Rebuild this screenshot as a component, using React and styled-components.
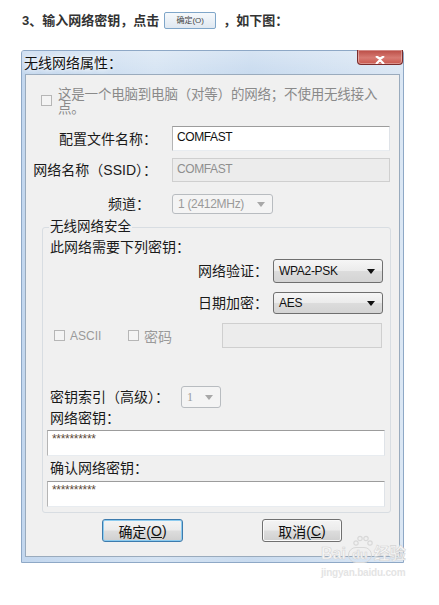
import React from 'react'
import styled, { createGlobalStyle } from 'styled-components';

const GlobalStyle = createGlobalStyle`
    html, body {
        margin: 0;
        padding: 0;
        background: #ffffff;
    }
    body {
        font-family: "Liberation Sans", "Noto Sans CJK SC", sans-serif;
        color: #1a1a1a;
    }
`;

const Page = styled.div`
    position: relative;
    width: 439px;
    height: 605px;
    overflow: hidden;
    background: #fff;
`;

const Intro = styled.div`
    display: flex;
    align-items: center;
    padding: 12px 0 0 22px;
    height: 17px;
    font-size: 13px;
    line-height: 17px;
    font-weight: bold;
    color: #333;
`;

const InlineButton = styled.span`
    display: inline-flex;
    align-items: center;
    justify-content: center;
    width: 50px;
    height: 15px;
    margin: 0 7px 0 5px;
    border: 1px solid #7fa6c9;
    border-radius: 2px;
    background: linear-gradient(#f6f9fc, #dfe8f1);
    font-size: 8px;
    font-weight: normal;
    color: #444;
`;

const Window = styled.div`
    width: 383px;
    margin: 21px 0 0 21px;
    box-sizing: border-box;
    border: 1px solid #8ea8c6;
    border-radius: 3px 3px 0 0;
    background: linear-gradient(90deg, #c3d7ee 0%, #d6e4f3 35%, #c9dbef 60%, #dbe7f4 100%);
    padding-bottom: 5px;
`;

const TitleBar = styled.div`
    display: flex;
    justify-content: space-between;
    align-items: flex-start;
    height: 23px;
    background: linear-gradient(180deg, rgba(255,255,255,0.25), rgba(255,255,255,0));
`;

const TitleText = styled.div`
    padding: 4px 0 0 2px;
    font-size: 14px;
    line-height: 16px;
    color: #111;
    text-shadow: 0 0 4px #ffffff, 0 0 6px #ffffff;
`;

const CloseButton = styled.div`
    display: flex;
    align-items: flex-end;
    justify-content: center;
    width: 46px;
    height: 15px;
    margin-top: -1px;
    box-sizing: border-box;
    border: 1px solid #7a2c2c;
    border-top: none;
    border-radius: 0 0 4px 4px;
    background: linear-gradient(180deg, #b94b44 0%, #d77a72 55%, #c9574e 100%);
    box-shadow: inset 0 0 0 1px rgba(255,255,255,0.35);
    overflow: hidden;
`;

const Panel = styled.div`
    margin: 0 3px;
    border: 1px solid #9aabbd;
    background: #f0f0f0;
    padding-bottom: 14px;
`;

const CheckRow = styled.div`
    display: flex;
    align-items: flex-start;
    gap: 6px;
    margin: 13px 0 0 15px;
`;

const Box = styled.span`
    flex: none;
    display: inline-block;
    width: 11px;
    height: 11px;
    box-sizing: border-box;
    margin-top: ${props => props.offset || 0}px;
    border: 1px solid ${props => props.disabled ? '#b6b6b6' : '#8f8f8f'};
    background: ${props => props.disabled ? '#f4f4f4' : 'linear-gradient(135deg, #e0e0e0, #ffffff)'};
`;

const WrapText = styled.div`
    font-size: 13.5px;
    line-height: 14px;
    color: #8a8a8a;
    letter-spacing: -0.2px;
`;

const FieldGrid = styled.div`
    display: grid;
    grid-template-columns: 131px 218px;
    column-gap: 15px;
    align-items: center;
    margin-top: 10px;
`;

const Label = styled.div`
    font-size: 14px;
    line-height: 16px;
    text-align: ${props => props.align || 'right'};
    color: ${props => props.disabled ? '#8d8d8d' : '#1a1a1a'};
    padding-right: ${props => props.pr || 0}px;
    margin-top: ${props => props.mt || 0}px;
    white-space: nowrap;
`;

const TextBox = styled.div`
    box-sizing: border-box;
    height: ${props => props.h}px;
    width: ${props => props.w ? props.w + 'px' : 'auto'};
    margin-top: ${props => props.mt || 0}px;
    margin-left: ${props => props.ml || 0}px;
    padding: 3px 4px;
    border: 1px solid;
    border-color: ${props => props.disabled ? '#cfcfcf' : '#9c9c9c #dfe3e8 #e8ecf0 #b5b5b5'};
    background: ${props => props.disabled ? '#ececec' : '#ffffff'};
    color: ${props => props.disabled ? '#8f8f8f' : '#111'};
    font-size: 12px;
    line-height: 14px;
    letter-spacing: -0.4px;
`;

const Secret = styled.span`
    display: block;
    margin-top: -1px;
    font-family: "Liberation Sans", sans-serif;
    font-size: 12px;
    line-height: 12px;
    letter-spacing: -0.3px;
    color: #5c4a38;
`;

const Combo = styled.div`
    box-sizing: border-box;
    display: flex;
    align-items: center;
    justify-content: space-between;
    width: ${props => props.w}px;
    height: ${props => props.h}px;
    margin-top: ${props => props.mt || 0}px;
    padding: 0 7px 0 5px;
    border: 1px solid ${props => props.disabled ? '#b8bcc0' : '#6f6f6f'};
    border-radius: 3px;
    background: ${props => props.disabled ? '#f4f4f4' : 'linear-gradient(180deg, #f6f6f6 0%, #ebebeb 50%, #dcdcdc 51%, #d4d4d4 100%)'};
    color: ${props => props.disabled ? '#9a9a9a' : '#111'};
    font-size: 12px;
    font-family: ${props => props.serif ? '"Liberation Serif", serif' : 'inherit'};
    letter-spacing: -0.3px;
`;

const Arrow = styled.span`
    width: 0;
    height: 0;
    border-left: 4px solid transparent;
    border-right: 4px solid transparent;
    border-top: 5px solid ${props => props.disabled ? '#a8a8a8' : '#111'};
`;

const Group = styled.fieldset`
    box-sizing: border-box;
    width: 349px;
    margin: 5px 0 0 16px;
    padding: 0 7px 5px 7px;
    border: 1px solid #d8dde2;
    border-radius: 3px;
    min-width: 0;
`;

const Legend = styled.legend`
    padding: 0 1px;
    margin-left: -1px;
    font-size: 13.5px;
    line-height: 16px;
    color: #1a1a1a;
`;

const Para = styled.div`
    margin-top: ${props => props.mt || 0}px;
    font-size: 14px;
    line-height: 16px;
    color: #1a1a1a;
    white-space: nowrap;
`;

const SecurityRow = styled.div`
    display: grid;
    grid-template-columns: 218px 110px;
    column-gap: 5px;
    align-items: center;
    margin-top: ${props => props.mt || 0}px;
`;

const OptionRow = styled.div`
    display: flex;
    align-items: center;
    margin-top: 9px;
    padding-left: 4px;
`;

const Option = styled.div`
    display: flex;
    align-items: center;
    gap: 5px;
    width: ${props => props.w}px;
    font-size: ${props => props.small ? 12 : 14}px;
    color: #9a9a9a;
`;

const IndexRow = styled.div`
    display: flex;
    align-items: center;
    gap: 12px;
    margin-top: 38px;
`;

const ButtonRow = styled.div`
    display: flex;
    gap: 79px;
    margin: 6px 0 0 76px;
`;

const DialogButton = styled.div`
    box-sizing: border-box;
    display: flex;
    align-items: center;
    justify-content: center;
    width: ${props => props.w}px;
    height: 23px;
    border: 1px solid ${props => props.focused ? '#3d7bad' : '#707070'};
    border-radius: 3px;
    background: linear-gradient(180deg, #f4f4f4 0%, #ebebeb 48%, #dddddd 52%, #cfcfcf 100%);
    box-shadow: ${props => props.focused ? 'inset 0 0 0 1px #8ccbef' : 'inset 0 0 0 1px #fafafa'};
    font-size: 14px;
    color: #111;
`;

const Key = styled.span`
    text-decoration: underline;
`;

const Watermark = styled.div`
    position: absolute;
    left: 321px;
    top: 545px;
    display: flex;
    flex-direction: column;
    align-items: flex-start;
    pointer-events: none;
`;

const MarkTop = styled.div`
    display: flex;
    align-items: flex-end;
    gap: 2px;
    font-size: 16px;
    font-weight: bold;
    line-height: 18px;
    -webkit-text-stroke: 0.6px #d4d4d4;
    color: #f7f7f7;
`;

const Du = styled.span`
    position: relative;
    padding: 0 3px;
    border: 1.5px solid #d8d8d8;
    border-radius: 9px;
    font-size: 13px;
    line-height: 14px;
`;

const MarkUrl = styled.div`
    margin-top: 4px;
    font-size: 10px;
    font-weight: bold;
    color: #e4e4e4;
    letter-spacing: -0.2px;
`;

const Paw = () => (
    <svg width="22" height="12" viewBox="0 0 22 12" style={{ position: 'absolute', left: 3, top: -13 }}>
        <circle cx="4" cy="8" r="2.2" fill="none" stroke="#d8d8d8" strokeWidth="1.2" />
        <circle cx="8" cy="3.5" r="2.2" fill="none" stroke="#d8d8d8" strokeWidth="1.2" />
        <circle cx="14" cy="3.5" r="2.2" fill="none" stroke="#d8d8d8" strokeWidth="1.2" />
        <circle cx="18" cy="8" r="2.2" fill="none" stroke="#d8d8d8" strokeWidth="1.2" />
    </svg>
);

const App = () => {
    return (
        <Page>
            <GlobalStyle />
            <Intro>
                3、输入网络密钥，点击<InlineButton>确定(O)</InlineButton>，如下图：
            </Intro>
            <Window>
                <TitleBar>
                    <TitleText>无线网络属性：</TitleText>
                    <CloseButton>
                        <svg width="12" height="8" viewBox="0 0 12 8">
                            <path d="M2 0 L6 3 L10 0 M2 8 L6 4 L10 8" stroke="#fff" strokeWidth="2.2" fill="none" />
                        </svg>
                    </CloseButton>
                </TitleBar>
                <Panel>
                    <CheckRow>
                        <Box disabled offset={7} />
                        <WrapText>
                            这是一个电脑到电脑（对等）的网络；不使用无线接入<br />点。
                        </WrapText>
                    </CheckRow>
                    <FieldGrid>
                        <Label>配置文件名称：</Label>
                        <TextBox h={25}>COMFAST</TextBox>
                        <Label mt={7}>网络名称（SSID）：</Label>
                        <TextBox h={24} mt={7} disabled>COMFAST</TextBox>
                        <Label pr={7} mt={12}>频道：</Label>
                        <Combo w={101} h={20} mt={12} disabled>
                            1 (2412MHz)
                            <Arrow disabled />
                        </Combo>
                    </FieldGrid>
                    <Group>
                        <Legend>无线网络安全</Legend>
                        <Para mt={4}>此网络需要下列密钥：</Para>
                        <SecurityRow mt={4}>
                            <Label>网络验证：</Label>
                            <Combo w={110} h={24}>
                                WPA2-PSK
                                <Arrow />
                            </Combo>
                        </SecurityRow>
                        <SecurityRow mt={9}>
                            <Label>日期加密：</Label>
                            <Combo w={110} h={22}>
                                AES
                                <Arrow />
                            </Combo>
                        </SecurityRow>
                        <OptionRow>
                            <Option w={74} small>
                                <Box disabled />
                                ASCII
                            </Option>
                            <Option w={94}>
                                <Box disabled />
                                密码
                            </Option>
                            <TextBox h={25} w={160} disabled />
                        </OptionRow>
                        <IndexRow>
                            <Label align="left">密钥索引（高级）：</Label>
                            <Combo w={40} h={22} disabled serif>
                                1
                                <Arrow disabled />
                            </Combo>
                        </IndexRow>
                        <Para mt={2}>网络密钥：</Para>
                        <TextBox h={26} w={338} mt={4} ml={-3}>
                            <Secret>**********</Secret>
                        </TextBox>
                        <Para mt={4}>确认网络密钥：</Para>
                        <TextBox h={26} w={338} mt={5} ml={-3}>
                            <Secret>**********</Secret>
                        </TextBox>
                    </Group>
                    <ButtonRow>
                        <DialogButton w={81} focused>确定(<Key>O</Key>)</DialogButton>
                        <DialogButton w={80}>取消(<Key>C</Key>)</DialogButton>
                    </ButtonRow>
                </Panel>
            </Window>
            <Watermark>
                <MarkTop>
                    Bai
                    <Du>
                        <Paw />
                        du
                    </Du>
                    经验
                </MarkTop>
                <MarkUrl>jingyan.baidu.com</MarkUrl>
            </Watermark>
        </Page>
    )
}

export default App;
